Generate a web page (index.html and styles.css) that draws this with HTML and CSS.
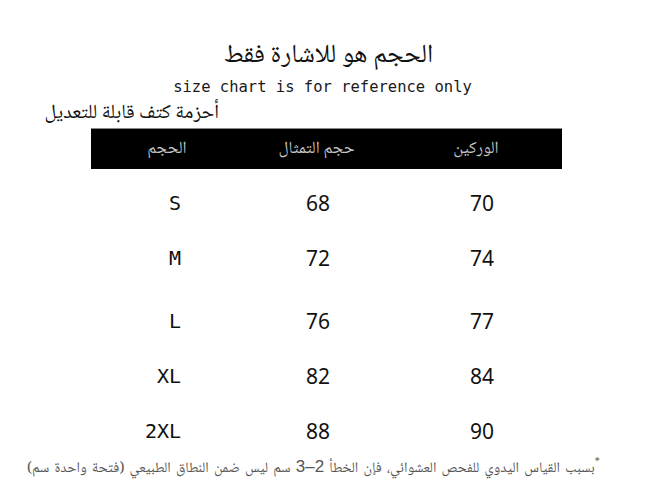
FILE: index.html
```html
<!DOCTYPE html>
<html lang="ar">
<head>
<meta charset="utf-8">
<title>Size chart</title>
<link rel="stylesheet" href="styles.css">
</head>
<body>
<div class="page">
  <h1 class="title" dir="rtl">الحجم هو للاشارة فقط</h1>
  <p class="subtitle">size chart is for reference only</p>
  <p class="note" dir="rtl">أحزمة كتف قابلة للتعديل</p>
  <div class="chart">
    <div class="head">
      <span dir="rtl">الحجم</span>
      <span dir="rtl">حجم التمثال</span>
      <span dir="rtl">الوركين</span>
    </div>
    <div class="row"><span class="size">S</span><span>68</span><span>70</span></div>
    <div class="row"><span class="size">M</span><span>72</span><span>74</span></div>
    <div class="row row-l"><span class="size">L</span><span>76</span><span>77</span></div>
    <div class="row"><span class="size">XL</span><span>82</span><span>84</span></div>
    <div class="row"><span class="size">2XL</span><span>88</span><span>90</span></div>
  </div>
  <p class="foot" dir="rtl"><sup>*</sup>بسبب القياس اليدوي للفحص العشوائي، فإن الخطأ <span class="num">2–3</span> سم ليس ضمن النطاق الطبيعي (فتحة واحدة سم)</p>
</div>
</body>
</html>
```
FILE: styles.css
```css
html, body {
  margin: 0;
  padding: 0;
  background: #ffffff;
}

.page {
  width: 657px;
  height: 491px;
  overflow: hidden;
  color: #111;
}

.title {
  margin: 0;
  padding-top: 35px;
  height: 42px;
  line-height: 42px;
  text-align: center;
  font-family: "Noto Naskh Arabic", "Amiri", "Scheherazade New", "DejaVu Serif", "DejaVu Sans", serif;
  font-size: 26px;
  font-weight: normal;
}

.subtitle {
  margin: 1px 0 0;
  height: 19px;
  line-height: 19px;
  text-align: center;
  font-family: "DejaVu Sans Mono", monospace;
  font-size: 15.5px;
  color: #1a1a1a;
  padding-right: 12px;
}

.note {
  margin: 4px 0 0;
  width: 219px;
  height: 27px;
  line-height: 27px;
  text-align: right;
  font-family: "Noto Naskh Arabic", "Amiri", "DejaVu Serif", "DejaVu Sans", serif;
  font-size: 20px;
}

.chart {
  margin-left: 91px;
  width: 471px;
}

.head {
  display: grid;
  grid-template-columns: 152px 147px 172px;
  height: 40px;
  align-items: center;
  background: #000;
  border-top: 1px solid #888;
  color: #c4c4c4;
  font-family: "Noto Naskh Arabic", "Amiri", "DejaVu Serif", "DejaVu Sans", serif;
  font-size: 17px;
  text-align: center;
  margin-bottom: 6px;
}

.row {
  display: grid;
  grid-template-columns: 90px 274px 54px;
  height: 55px;
  align-items: center;
  text-align: center;
  font-family: "Noto Sans", "Liberation Sans", sans-serif;
  font-size: 21px;
  color: #111;
}

.row-l {
  margin-top: 8px;
}

.row .size {
  text-align: right;
  font-family: "DejaVu Sans Mono", monospace;
  font-size: 20px;
}

.foot {
  margin: 0;
  padding-left: 27px;
  width: 590px;
  text-align: left;
  height: 18px;
  line-height: 18px;
  font-family: "Noto Naskh Arabic", "Amiri", "DejaVu Serif", "DejaVu Sans", serif;
  font-size: 14.5px;
  word-spacing: 2px;
  color: #555;
}

.foot .num {
  font-family: "Liberation Sans", Arial, sans-serif;
  font-size: 17px;
  word-spacing: 0;
}

.foot sup {
  font-size: 10px;
  vertical-align: top;
  line-height: 10px;
}
```
